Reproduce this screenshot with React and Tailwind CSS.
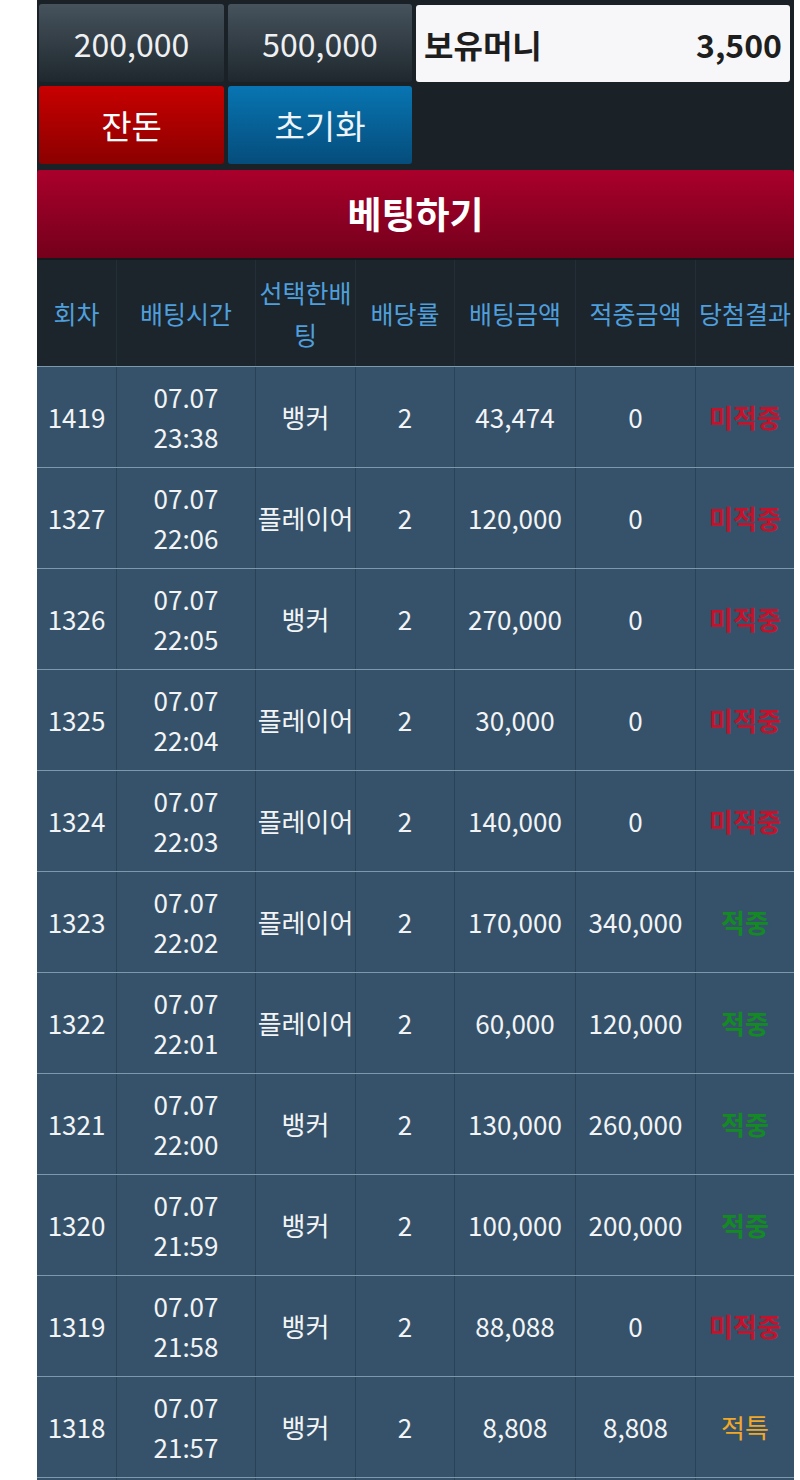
const FONT = { fontFamily: '"Noto Sans CJK KR", "Noto Sans", sans-serif' }

const rows = [
  { no: '1419', date: '07.07', time: '23:38', pick: '뱅커', odds: '2', bet: '43,474', win: '0', result: 'lose' },
  { no: '1327', date: '07.07', time: '22:06', pick: '플레이어', odds: '2', bet: '120,000', win: '0', result: 'lose' },
  { no: '1326', date: '07.07', time: '22:05', pick: '뱅커', odds: '2', bet: '270,000', win: '0', result: 'lose' },
  { no: '1325', date: '07.07', time: '22:04', pick: '플레이어', odds: '2', bet: '30,000', win: '0', result: 'lose' },
  { no: '1324', date: '07.07', time: '22:03', pick: '플레이어', odds: '2', bet: '140,000', win: '0', result: 'lose' },
  { no: '1323', date: '07.07', time: '22:02', pick: '플레이어', odds: '2', bet: '170,000', win: '340,000', result: 'win' },
  { no: '1322', date: '07.07', time: '22:01', pick: '플레이어', odds: '2', bet: '60,000', win: '120,000', result: 'win' },
  { no: '1321', date: '07.07', time: '22:00', pick: '뱅커', odds: '2', bet: '130,000', win: '260,000', result: 'win' },
  { no: '1320', date: '07.07', time: '21:59', pick: '뱅커', odds: '2', bet: '100,000', win: '200,000', result: 'win' },
  { no: '1319', date: '07.07', time: '21:58', pick: '뱅커', odds: '2', bet: '88,088', win: '0', result: 'lose' },
  { no: '1318', date: '07.07', time: '21:57', pick: '뱅커', odds: '2', bet: '8,808', win: '8,808', result: 'tie' },
]

const RESULT = {
  lose: { label: '미적중', cls: 'text-[#c4122c] font-bold' },
  win: { label: '적중', cls: 'text-[#138a24] font-bold' },
  tie: { label: '적특', cls: 'text-[#f2a826]' },
}

const COLS = 'grid grid-cols-[80px_139px_100px_99px_121px_120px_98px]'

function Cell({ children, className = '' }) {
  return (
    <div className={`flex flex-col items-center justify-center text-center whitespace-nowrap border-r border-[#2a4255] last:border-r-0 ${className}`}>
      {children}
    </div>
  )
}

export default function App() {
  return (
    <div className="w-[800px] h-[1480px] overflow-hidden bg-white" style={FONT}>
      <div className="ml-[37px] w-[757px] bg-[#1b2227] pt-1">
        {/* top buttons */}
        <div className="flex gap-1 pl-[2px] pr-1">
          <button className="w-[185px] h-[78px] rounded-[3px] bg-gradient-to-b from-[#46535d] to-[#1f282e] text-[#eef0f2] text-[32px] leading-none">
            200,000
          </button>
          <button className="w-[184px] h-[78px] rounded-[3px] bg-gradient-to-b from-[#46535d] to-[#1f282e] text-[#eef0f2] text-[32px] leading-none">
            500,000
          </button>
          <div className="flex-1 h-[77px] mt-[1px] rounded-[3px] bg-[#f7f7f9] flex items-center justify-between px-2 text-[#1e1e1e] text-[32px] font-bold">
            <span>보유머니</span>
            <span>3,500</span>
          </div>
        </div>
        <div className="flex gap-1 pl-[2px] pr-1 mt-1">
          <button className="w-[185px] h-[78px] rounded-[3px] bg-gradient-to-b from-[#c80000] to-[#8c0000] text-white text-[33px] leading-none">
            잔돈
          </button>
          <button className="w-[184px] h-[78px] rounded-[3px] bg-gradient-to-b from-[#0875b2] to-[#054d7c] text-[#eef4f8] text-[33px] leading-none">
            초기화
          </button>
        </div>

        {/* banner */}
        <div className="mt-[6px] h-[88px] rounded-t-[3px] bg-gradient-to-b from-[#aa002b] to-[#74001c] flex items-center justify-center text-white text-[37px] font-bold">
          베팅하기
        </div>
        <div className="h-[2px] bg-[#14191d]" />

        {/* header */}
        <div className={`${COLS} h-[106px] bg-[#1c252c] text-[#4f9fdc] text-[25px] leading-[42px]`}>
          <Cell className="border-[#232e37]">회차</Cell>
          <Cell className="border-[#232e37]">배팅시간</Cell>
          <Cell className="border-[#232e37]">
            <span>선택한배</span>
            <span>팅</span>
          </Cell>
          <Cell className="border-[#232e37]">배당률</Cell>
          <Cell className="border-[#232e37]">배팅금액</Cell>
          <Cell className="border-[#232e37]">적중금액</Cell>
          <Cell className="border-[#232e37]">당첨결과</Cell>
        </div>

        {/* rows */}
        {rows.map((r) => (
          <div
            key={r.no}
            className={`${COLS} h-[101px] bg-[#36526a] border-t border-[#7b98ad] text-[#f2f4f6] text-[26px] leading-[40px]`}
          >
            <Cell>{r.no}</Cell>
            <Cell>
              <span>{r.date}</span>
              <span>{r.time}</span>
            </Cell>
            <Cell>{r.pick}</Cell>
            <Cell>{r.odds}</Cell>
            <Cell>{r.bet}</Cell>
            <Cell>{r.win}</Cell>
            <Cell>
              <span className={RESULT[r.result].cls}>{RESULT[r.result].label}</span>
            </Cell>
          </div>
        ))}
        <div className={`${COLS} h-[40px] bg-[#36526a] border-t border-[#7b98ad]`}>
          <Cell />
          <Cell />
          <Cell />
          <Cell />
          <Cell />
          <Cell />
          <Cell />
        </div>
      </div>
    </div>
  )
}
